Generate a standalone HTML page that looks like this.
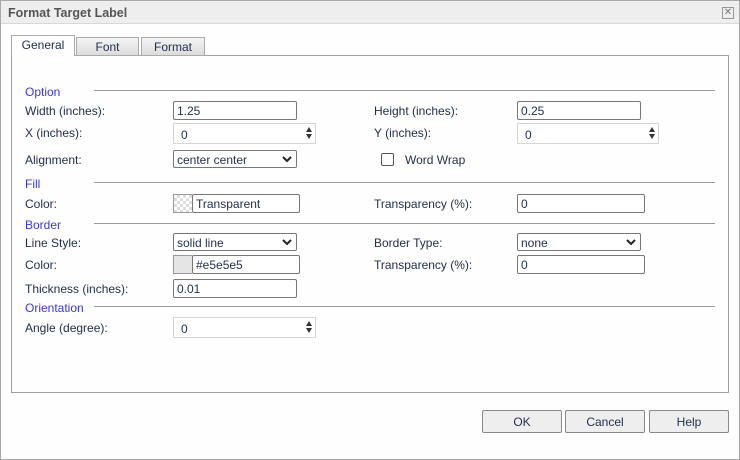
<!DOCTYPE html>
<html><head><style>
*{box-sizing:border-box;margin:0;padding:0}
body{width:740px;height:460px;background:#fff;font-family:"Liberation Sans",sans-serif;font-size:12px;color:#1f2d4d;position:relative;overflow:hidden}
.a{position:absolute}
.dlg{left:0;top:0;width:740px;height:460px;border:1px solid #a8a8a8;background:#fdfefd}
.title{left:1px;top:1px;width:738px;height:23px;background:#eeeeee;border-bottom:1px solid #d8d8d8;font-weight:bold;font-size:12.5px;color:#555;padding:5px 0 0 7px}
.close{left:722px;top:7px;width:12px;height:12px;border:1px solid #999;color:#777;font-size:10px;line-height:9px;text-align:center}
.tab{top:37px;height:19px;border:1px solid #aaa;background:linear-gradient(#f4f4f4,#dcdcdc);text-align:center;padding-top:2px}
.tab.on{top:35px;height:21px;background:#fdfefd;border-bottom:none;z-index:2}
.panel{left:11px;top:55px;width:718px;height:338px;border:1px solid #a0a0a0}
.sec{color:#3a3ad0}
.hr{height:1px;background:#9a9a9a}
.in{border:1px solid #777;border-radius:2px;height:19px;padding:2px 0 0 3px;background:#fff}
.sp{border:1px solid #d4d4d4;height:21px;padding:4px 0 0 7px;background:#fff}
.sp:after{content:"";position:absolute;right:3px;top:3px;border:3.5px solid transparent;border-bottom:5px solid #333;border-top:none}
.sp:before{content:"";position:absolute;right:3px;top:10px;border:3.5px solid transparent;border-top:5px solid #333;border-bottom:none}
.sel{border:1px solid #777;border-radius:2px;height:18px;padding:2px 0 0 3px;background:#fff}
.sel svg{position:absolute;right:4px;top:5px}
.btn{top:410px;width:80px;height:23px;border:1px solid #888;border-radius:2px;background:#eeeeee;text-align:center;padding-top:4px}
.sw{width:19px;height:19px;border:1px solid #999;border-right:none}
</style></head><body>
<div class="a dlg"></div>
<div class="a title">Format Target Label</div>
<div class="a close">✕</div>
<div class="a panel"></div>
<div class="a tab on" style="left:11px;width:64px">General</div>
<div class="a tab" style="left:76px;width:63px">Font</div>
<div class="a tab" style="left:141px;width:64px">Format</div>

<div class="a sec" style="left:25px;top:85px">Option</div><div class="a hr" style="left:94px;top:90px;width:621px"></div>
<div class="a" style="left:25px;top:104px">Width (inches):</div>
<div class="a in" style="left:173px;top:101px;width:124px">1.25</div>
<div class="a" style="left:374px;top:104px">Height (inches):</div>
<div class="a in" style="left:517px;top:101px;width:124px">0.25</div>
<div class="a" style="left:25px;top:126px">X (inches):</div>
<div class="a sp" style="left:173px;top:123px;width:143px">0</div>
<div class="a" style="left:374px;top:126px">Y (inches):</div>
<div class="a sp" style="left:517px;top:123px;width:142px">0</div>
<div class="a" style="left:25px;top:153px">Alignment:</div>
<div class="a sel" style="left:173px;top:150px;width:124px">center center<svg width="10" height="7"><path d="M1 1l4 4 4-4" stroke="#222" stroke-width="2" fill="none"/></svg></div>
<div class="a" style="left:381px;top:153px;width:13px;height:13px;border:1px solid #555;border-radius:2px"></div>
<div class="a" style="left:405px;top:153px">Word Wrap</div>

<div class="a sec" style="left:25px;top:177px">Fill</div><div class="a hr" style="left:94px;top:182px;width:621px"></div>
<div class="a" style="left:25px;top:197px">Color:</div>
<div class="a sw" style="left:173px;top:194px;background:repeating-conic-gradient(#ddd 0 25%,#fff 0 50%) 0 0/6px 6px"></div>
<div class="a in" style="left:192px;top:194px;width:108px">Transparent</div>
<div class="a" style="left:374px;top:197px">Transparency (%):</div>
<div class="a in" style="left:517px;top:194px;width:128px">0</div>

<div class="a sec" style="left:25px;top:218px">Border</div><div class="a hr" style="left:94px;top:223px;width:621px"></div>
<div class="a" style="left:25px;top:236px">Line Style:</div>
<div class="a sel" style="left:173px;top:233px;width:124px">solid line<svg width="10" height="7"><path d="M1 1l4 4 4-4" stroke="#222" stroke-width="2" fill="none"/></svg></div>
<div class="a" style="left:374px;top:236px">Border Type:</div>
<div class="a sel" style="left:517px;top:233px;width:124px">none<svg width="10" height="7"><path d="M1 1l4 4 4-4" stroke="#222" stroke-width="2" fill="none"/></svg></div>
<div class="a" style="left:25px;top:258px">Color:</div>
<div class="a sw" style="left:173px;top:255px;background:#e5e5e5"></div>
<div class="a in" style="left:192px;top:255px;width:108px">#e5e5e5</div>
<div class="a" style="left:374px;top:258px">Transparency (%):</div>
<div class="a in" style="left:517px;top:255px;width:128px">0</div>
<div class="a" style="left:25px;top:282px">Thickness (inches):</div>
<div class="a in" style="left:173px;top:279px;width:124px">0.01</div>

<div class="a sec" style="left:25px;top:301px">Orientation</div><div class="a hr" style="left:94px;top:306px;width:621px"></div>
<div class="a" style="left:25px;top:321px">Angle (degree):</div>
<div class="a sp" style="left:173px;top:317px;width:143px">0</div>

<div class="a btn" style="left:482px">OK</div>
<div class="a btn" style="left:565px">Cancel</div>
<div class="a btn" style="left:649px">Help</div>
</body></html>
